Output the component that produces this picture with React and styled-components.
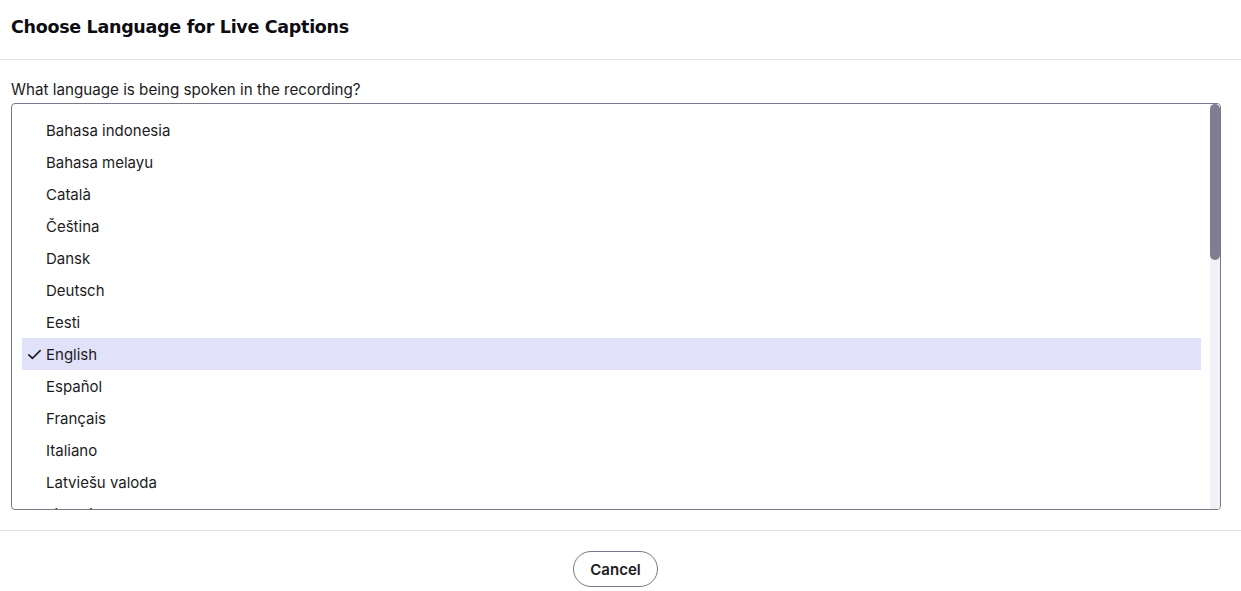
import React, { useState } from "react";
import styled, { createGlobalStyle } from "styled-components";

const GlobalStyle = createGlobalStyle`
  html, body {
    margin: 0;
    padding: 0;
    background: #ffffff;
    font-family: "Inter", "Noto Sans", sans-serif;
    color: #1c1b22;
  }
`;

const Dialog = styled.div`
  width: 1241px;
  height: 591px;
  display: flex;
  flex-direction: column;
  background: #fff;
`;

const Header = styled.header`
  height: 60px;
  border-bottom: 1px solid #e2e2e6;
  display: flex;
  align-items: center;
  padding: 0 11px 6px;
  box-sizing: border-box;
  flex-shrink: 0;
`;

const Title = styled.h1`
  margin: 0;
  font-family: "DejaVu Sans", "Inter", sans-serif;
  font-weight: 700;
  font-size: 17.5px;
  letter-spacing: -0.3px;
  color: #0d0c12;
`;

const Body = styled.div`
  padding: 20px 20px 20px 11px;
  border-bottom: 1px solid #e2e2e6;
`;

const Label = styled.label`
  display: block;
  font-size: 15.2px;
  line-height: 20px;
  color: #1c1b22;
  margin-bottom: 3px;
`;

const ListBox = styled.div`
  height: 407px;
  box-sizing: border-box;
  border: 1px solid #7a7789;
  border-radius: 4px;
  display: flex;
  overflow: hidden;
`;

const List = styled.ul`
  flex: 1;
  list-style: none;
  margin: 0;
  padding: 10px 9px 10px 10px;
  overflow: hidden;
`;

const ScrollTrack = styled.div`
  width: 10px;
  background: #f1f0f4;
  display: flex;
  flex-direction: column;
`;

const ScrollThumb = styled.div`
  height: 156px;
  background: #7f7d8f;
  border-radius: 5px;
`;

const Option = styled.li`
  height: 32px;
  display: flex;
  align-items: center;
  padding-left: 4px;
  font-size: 15px;
  color: #1c1b22;
  background: ${(p) => (p.$selected ? "#e1e1f9" : "transparent")};
  cursor: pointer;
`;

const Check = styled.span`
  width: 20px;
  display: flex;
  align-items: center;
`;

const Footer = styled.footer`
  flex: 1;
  display: flex;
  justify-content: center;
  align-items: flex-start;
  padding: 20px 10px 0 0;
`;

const CancelButton = styled.button`
  height: 36px;
  padding: 0 16px;
  border: 1px solid #77758a;
  border-radius: 18px;
  background: #fff;
  font-family: "Inter", "Noto Sans", sans-serif;
  font-weight: 600;
  font-size: 15px;
  color: #1c1b22;
  cursor: pointer;
`;

const languages = [
  "Bahasa indonesia",
  "Bahasa melayu",
  "Català",
  "Čeština",
  "Dansk",
  "Deutsch",
  "Eesti",
  "English",
  "Español",
  "Français",
  "Italiano",
  "Latviešu valoda",
  "Lietuvių kalba",
  "Magyar",
  "Nederlands",
  "Norsk",
  "Polski",
  "Português",
  "Română",
  "Slovenčina",
  "Slovenščina",
  "Suomi",
  "Svenska",
  "Tiếng Việt",
  "Türkçe",
  "Ελληνικά",
  "Русский",
  "Українська",
  "日本語",
  "中文",
  "한국어",
];

const CheckIcon = () => (
  <svg width="17" height="17" viewBox="0 0 24 24" fill="none" stroke="#1c1b22" strokeWidth="2.3" strokeLinecap="round" strokeLinejoin="round">
    <path d="M4 12.5l5 5L20 6.5" />
  </svg>
);

const App = () => {
  const [selected, setSelected] = useState("English");
  return (
    <Dialog>
      <GlobalStyle />
      <Header>
        <Title>Choose Language for Live Captions</Title>
      </Header>
      <Body>
        <Label>What language is being spoken in the recording?</Label>
        <ListBox>
          <List role="listbox">
            {languages.map((lang) => (
              <Option
                key={lang}
                role="option"
                $selected={lang === selected}
                onClick={() => setSelected(lang)}
              >
                <Check>{lang === selected && <CheckIcon />}</Check>
                {lang}
              </Option>
            ))}
          </List>
          <ScrollTrack>
            <ScrollThumb />
          </ScrollTrack>
        </ListBox>
      </Body>
      <Footer>
        <CancelButton>Cancel</CancelButton>
      </Footer>
    </Dialog>
  );
};

export default App;
